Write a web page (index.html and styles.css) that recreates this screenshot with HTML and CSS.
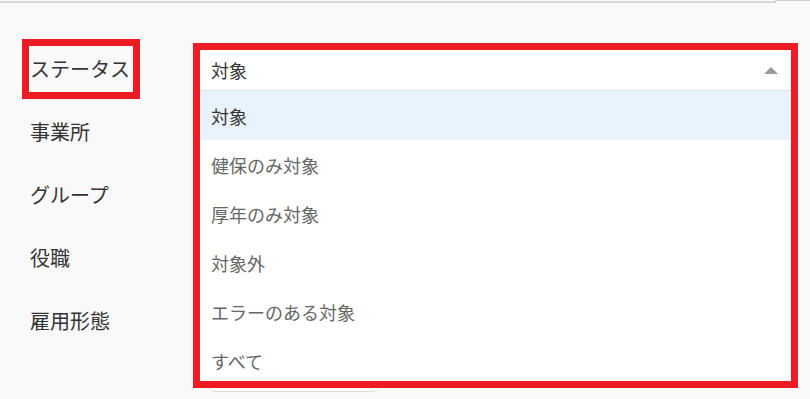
FILE: index.html
```html
<!DOCTYPE html>
<html lang="ja">
<head>
<meta charset="utf-8">
<title>ステータス</title>
<link rel="stylesheet" href="styles.css">
</head>
<body>
<div class="topbar"><span class="topbar-left"></span><span class="topbar-tick"></span><span class="topbar-right"></span></div>
<form class="form">
  <div class="label label-marked">ステータス</div>
  <div class="field">
    <div class="select-wrap">
      <div class="select open">
        <span class="select-value">対象</span>
        <span class="caret"></span>
      </div>
      <ul class="menu">
        <li class="option active">対象</li>
        <li class="option">健保のみ対象</li>
        <li class="option">厚年のみ対象</li>
        <li class="option">対象外</li>
        <li class="option">エラーのある対象</li>
        <li class="option">すべて</li>
      </ul>
      <div class="mark-frame"></div>
    </div>
  </div>

  <div class="label">事業所</div>
  <div class="field"><div class="select"></div></div>

  <div class="label">グループ</div>
  <div class="field"><div class="select"></div></div>

  <div class="label">役職</div>
  <div class="field"><div class="select"></div></div>

  <div class="label">雇用形態</div>
  <div class="field"><div class="select"></div></div>

  <div class="spacer"></div>
  <div class="field actions"><button type="button" class="btn">検索</button></div>
</form>
</body>
</html>
```

FILE: styles.css
```css
* { box-sizing: border-box; }

html, body {
  margin: 0;
  padding: 0;
  background: #f9f9f9;
  font-family: "Noto Sans CJK JP", "Noto Sans", sans-serif;
  color: #333;
  overflow: hidden;
}

.topbar {
  display: flex;
  height: 3px;
  align-items: flex-start;
}
.topbar-left {
  width: 775px;
  height: 2px;
  margin-top: 1px;
  background: #d6d6d6;
}
.topbar-tick {
  width: 1px;
  height: 3px;
  background: #d0d0d0;
}
.topbar-right {
  flex: 1;
  height: 1px;
  background: #cfcfcf;
}

.form {
  display: grid;
  grid-template-columns: 200px 591px;
  grid-auto-rows: 63px;
  padding-top: 36px;
  margin: 0;
}

.label {
  align-self: start;
  justify-self: start;
  margin: 7px 0 0 29px;
  padding: 13px 3px 13px 1px;
  font-size: 20px;
  line-height: 20px;
  color: #333;
  white-space: nowrap;
}
.label-marked {
  outline: 7px solid #ed1c24;
}

.field {
  padding-top: 11px;
}

.select-wrap {
  position: relative;
}

.select {
  position: relative;
  height: 40px;
  background: #fff;
  border: 1px solid #e2e2e2;
  border-radius: 3px;
  display: flex;
  align-items: center;
  padding: 0 11px;
  font-size: 18px;
  color: #333;
}
.select.open {
  border: none;
  border-radius: 0;
}

.select-value {
  flex: 1;
  line-height: 20px;
}

.caret {
  width: 0;
  height: 0;
  border-left: 7px solid transparent;
  border-right: 7px solid transparent;
  border-bottom: 7px solid #9b9b9b;
  margin-right: 2px;
}

.menu {
  position: absolute;
  z-index: 5;
  top: 40px;
  left: 0;
  right: 0;
  height: 291px;
  margin: 0;
  padding: 0;
  list-style: none;
  background: #fff;
  border-top: 1px solid #e0e0e0;
  overflow: hidden;
}

.option {
  height: 49px;
  display: flex;
  align-items: center;
  padding: 0 11px;
  font-size: 18px;
  color: #666;
}
.option.active {
  background: #e9f3fd;
  color: #333;
}

.mark-frame {
  position: absolute;
  z-index: 6;
  top: -7px;
  left: -7px;
  right: -7px;
  height: 345px;
  border: 7px solid #ed1c24;
  pointer-events: none;
}

.actions {
  padding-top: 2px;
}

.btn {
  display: block;
  margin-left: 8px;
  width: 172px;
  height: 36px;
  background: #fff;
  border: 1px solid #dcdcdc;
  border-radius: 8px;
  font-family: inherit;
  font-size: 16px;
  color: #333;
}
```
